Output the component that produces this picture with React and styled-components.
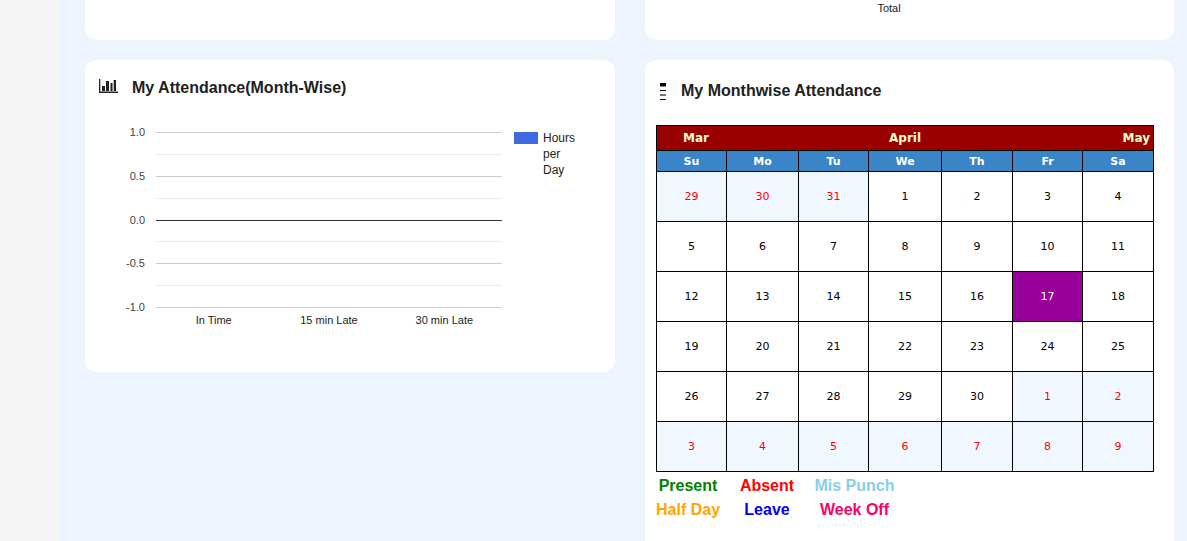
import React from 'react';
import styled, { createGlobalStyle } from 'styled-components';

const Global = createGlobalStyle`
  html, body {
    margin: 0;
    padding: 0;
    height: 541px;
    overflow: hidden;
    background: #f5f5f5;
  }
  body {
    font-family: "Liberation Sans", Arial, sans-serif;
  }
`;

const Page = styled.div`
  display: flex;
  height: 541px;
`;

const Sidebar = styled.div`
  width: 60px;
  flex: none;
  background: #f5f5f5;
`;

const Main = styled.div`
  flex: 1;
  background: #edf4fe;
  padding: 0 13px 0 25px;
  display: grid;
  grid-template-columns: 530px 529px;
  column-gap: 30px;
  align-items: start;
  overflow: hidden;
`;

const Column = styled.div`
  display: flex;
  flex-direction: column;
  gap: 20px;
`;

const Card = styled.div`
  background: #fff;
  border-radius: 12px;
  height: ${p => p.$height}px;
  ${p => p.$top && 'border-radius: 0 0 12px 12px;'}
`;

const TotalLabel = styled.div`
  font-size: 11px;
  line-height: 12px;
  padding-top: 2px;
  color: #222;
  text-align: center;
  margin-right: 41px;
`;

const CardHeader = styled.div`
  display: flex;
  align-items: center;
  height: ${p => p.$height}px;
  padding-left: ${p => p.$pad}px;
  gap: ${p => p.$gap}px;
`;

const Title = styled.h3`
  margin: 0;
  font-size: 16px;
  font-weight: 700;
  color: #212121;
`;

const ChartWrap = styled.div`
  display: flex;
  padding-top: 17px;
`;

const YAxis = styled.div`
  width: 71px;
  flex: none;
  height: 175px;
  display: flex;
  flex-direction: column;
  justify-content: space-between;
  font-size: 11px;
  line-height: 0;
  text-align: right;
  color: #444;
  padding-right: 11px;
  box-sizing: border-box;
`;

const Plot = styled.div`
  width: 346px;
  flex: none;
`;

const Grid = styled.div`
  height: 176px;
  display: flex;
  flex-direction: column;
  justify-content: space-between;
`;

const GridLine = styled.div`
  height: 1px;
  background: ${p => (p.$kind === 'zero' ? '#333' : p.$kind === 'minor' ? '#ebebeb' : '#ccc')};
`;

const XAxis = styled.div`
  display: grid;
  grid-template-columns: repeat(3, 1fr);
  font-size: 11px;
  line-height: 12px;
  margin-top: 6px;
  text-align: center;
  color: #222;
`;

const Legend = styled.div`
  display: flex;
  margin-left: 12px;
  gap: 5px;
`;

const Swatch = styled.div`
  width: 24px;
  height: 12px;
  background: #4169e1;
`;

const LegendText = styled.div`
  width: 40px;
  font-size: 12px;
  line-height: 16px;
  color: #222;
  margin-top: -2px;
`;

const CalendarWrap = styled.div`
  padding: 3px 20px 0 11px;
`;

const Calendar = styled.table`
  width: 498px;
  border-collapse: collapse;
  table-layout: fixed;
  font-family: Verdana, "DejaVu Sans", sans-serif;
  font-size: 11px;
`;

const Column7 = styled.col`
  width: ${p => p.$width}px;
`;

const MonthRow = styled.td`
  background: #990000;
  border: 1px solid #000;
  height: 24px;
  padding: 0;
`;

const MonthBar = styled.div`
  display: grid;
  grid-template-columns: 206px 1fr auto;
  align-items: center;
  color: #ffffcc;
  font-weight: 700;
  font-size: 12px;
  padding: 0 3px 0 26px;
`;

const DayHead = styled.th`
  background: #3a85c8;
  border: 1px solid #000;
  color: #fff;
  height: 20px;
  padding: 0;
  font-size: 11px;
  font-weight: 700;
`;

const DayCell = styled.td`
  border: 1px solid #000;
  height: 49px;
  padding: 0;
  text-align: center;
  background: ${p => (p.$today ? '#990099' : p.$other ? '#f0f7ff' : '#fff')};
  color: ${p => (p.$today ? '#fff' : p.$other ? '#ff0000' : '#000')};
`;

const Keys = styled.div`
  display: grid;
  grid-template-columns: 64px 94px 81px;
  margin-top: 2px;
  font-size: 16px;
  font-weight: 700;
  line-height: 24px;
  text-align: center;
`;

const Key = styled.div`
  color: ${p => p.$color};
  white-space: nowrap;
`;

const ChartIcon = () => (
  <svg width="19" height="17" viewBox="0 0 19 17">
    <path d="M0 0h1.3v12.6H19V14H0z" fill="#222" />
    <path d="M3 7h3v5H3zM7 2h3v10H7zM11.5 4h2v8h-2zM14.7 1H17v11h-2.3z" fill="#222" />
  </svg>
);

const ListIcon = () => (
  <svg width="6" height="17" viewBox="0 0 6 17">
    <rect x="0" y="0" width="6" height="3.5" fill="#000" />
    <rect x="0" y="7" width="6" height="1" fill="#111" />
    <rect x="0" y="11" width="6" height="2" fill="#777" />
    <rect x="0" y="16" width="6" height="1" fill="#111" />
  </svg>
);

const gridKinds = ['major', 'minor', 'major', 'minor', 'zero', 'minor', 'major', 'minor', 'major'];

const columnWidths = [70, 72, 70, 73, 71, 70, 71];

const weeks = [
  [29, 30, 31, 1, 2, 3, 4],
  [5, 6, 7, 8, 9, 10, 11],
  [12, 13, 14, 15, 16, 17, 18],
  [19, 20, 21, 22, 23, 24, 25],
  [26, 27, 28, 29, 30, 1, 2],
  [3, 4, 5, 6, 7, 8, 9],
];

const isOther = (w, d) => (w === 0 ? d < 3 : w === 4 ? d > 4 : w === 5);

const App = () => (
  <Page>
    <Global />
    <Sidebar />
    <Main>
      <Column>
        <Card $height={40} $top />
        <Card $height={312}>
          <CardHeader $height={55} $pad={14} $gap={14}>
            <ChartIcon />
            <Title>My Attendance(Month-Wise)</Title>
          </CardHeader>
          <ChartWrap>
            <YAxis>
              <span>1.0</span>
              <span>0.5</span>
              <span>0.0</span>
              <span>-0.5</span>
              <span>-1.0</span>
            </YAxis>
            <Plot>
              <Grid>
                {gridKinds.map((k, i) => <GridLine key={i} $kind={k} />)}
              </Grid>
              <XAxis>
                <span>In Time</span>
                <span>15 min Late</span>
                <span>30 min Late</span>
              </XAxis>
            </Plot>
            <Legend>
              <Swatch />
              <LegendText>Hours per Day</LegendText>
            </Legend>
          </ChartWrap>
        </Card>
      </Column>
      <Column>
        <Card $height={40} $top>
          <TotalLabel>Total</TotalLabel>
        </Card>
        <Card $height={520}>
          <CardHeader $height={62} $pad={15} $gap={15}>
            <ListIcon />
            <Title>My Monthwise Attendance</Title>
          </CardHeader>
          <CalendarWrap>
            <Calendar>
              <colgroup>
                {columnWidths.map((w, i) => <Column7 key={i} $width={w} />)}
              </colgroup>
              <tbody>
                <tr>
                  <MonthRow colSpan={7}>
                    <MonthBar>
                      <span>Mar</span>
                      <span>April</span>
                      <span>May</span>
                    </MonthBar>
                  </MonthRow>
                </tr>
                <tr>
                  {['Su', 'Mo', 'Tu', 'We', 'Th', 'Fr', 'Sa'].map(d => <DayHead key={d}>{d}</DayHead>)}
                </tr>
                {weeks.map((days, w) => (
                  <tr key={w}>
                    {days.map((d, i) => (
                      <DayCell key={i} $other={isOther(w, i)} $today={w === 2 && i === 5}>{d}</DayCell>
                    ))}
                  </tr>
                ))}
              </tbody>
            </Calendar>
            <Keys>
              <Key $color="#008000">Present</Key>
              <Key $color="#ff0000">Absent</Key>
              <Key $color="#87ceeb">Mis Punch</Key>
              <Key $color="#ffa500">Half Day</Key>
              <Key $color="#0000ff">Leave</Key>
              <Key $color="#ff0066">Week Off</Key>
            </Keys>
          </CalendarWrap>
        </Card>
      </Column>
    </Main>
  </Page>
);

export default App;
